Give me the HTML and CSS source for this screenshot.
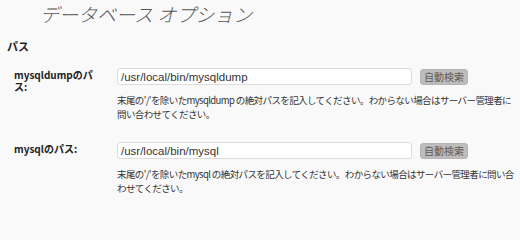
FILE: index.html
```html
<!DOCTYPE html>
<html lang="ja">
<head>
<meta charset="utf-8">
<link rel="stylesheet" href="styles.css">
</head>
<body>
<div class="wrap">
  <h2 class="title">データベース オプション</h2>
  <h3 class="section">パス</h3>
  <div class="row">
    <div class="label">mysqldumpのパス:</div>
    <div class="field">
      <div class="controls">
        <input class="path" type="text" value="/usr/local/bin/mysqldump">
        <button class="btn" type="button">自動検索</button>
      </div>
      <p class="desc">末尾の'/'を除いたmysqldump の絶対パスを記入してください。わからない場合はサーバー管理者に問い合わせてください。</p>
    </div>
  </div>
  <div class="row">
    <div class="label">mysqlのパス:</div>
    <div class="field">
      <div class="controls">
        <input class="path" type="text" value="/usr/local/bin/mysql">
        <button class="btn" type="button">自動検索</button>
      </div>
      <p class="desc">末尾の'/'を除いたmysql の絶対パスを記入してください。わからない場合はサーバー管理者に問い合わせてください。</p>
    </div>
  </div>
</div>
</body>
</html>
```
FILE: styles.css
```css
html, body {
  margin: 0;
  padding: 0;
  background: #f9f9f9;
}
body {
  font-family: "Noto Sans CJK JP", sans-serif;
  color: #333;
  width: 520px;
  height: 212px;
  overflow: hidden;
}
.wrap {
  padding: 2px 0 0 0;
}
.title {
  margin: 0;
  padding-left: 40px;
  font-size: 19px;
  line-height: 24px;
  font-weight: 300;
  font-style: italic;
  color: #555;
}
.section {
  margin: 12px 0 0 0;
  padding-left: 7px;
  font-size: 11px;
  line-height: 16px;
  font-weight: bold;
  color: #222;
}
.row {
  display: flex;
  margin-top: 14px;
}
.row + .row {
  margin-top: 21px;
}
.label {
  flex: 0 0 117px;
  box-sizing: border-box;
  padding: 1px 21px 0 14px;
  font-family: "Noto Sans CJK JP", sans-serif;
  font-size: 10px;
  line-height: 12px;
  font-weight: bold;
  color: #222;
}
.field {
  flex: 0 0 397px;
}
.controls {
  display: flex;
  align-items: center;
  gap: 8px;
}
.path {
  box-sizing: border-box;
  width: 295px;
  height: 17px;
  margin: 0;
  padding: 0 3px;
  border: 1px solid #dcdcdc;
  border-radius: 3px;
  background: #fff;
  font-family: "Liberation Sans", sans-serif;
  font-size: 11.5px;
  color: #333;
}
.btn {
  box-sizing: border-box;
  width: 48px;
  height: 16px;
  margin: 0;
  padding: 0;
  border: 1px solid #b4b4b4;
  border-radius: 3px;
  background: #bdbdbd;
  font-family: "Noto Sans CJK JP", sans-serif;
  font-size: 10px;
  line-height: 14px;
  color: #5a5a5a;
}
.desc {
  margin: 8px 0 0 0;
  font-size: 9.5px;
  letter-spacing: -0.6px;
  line-height: 14px;
  color: #333;
}
```
